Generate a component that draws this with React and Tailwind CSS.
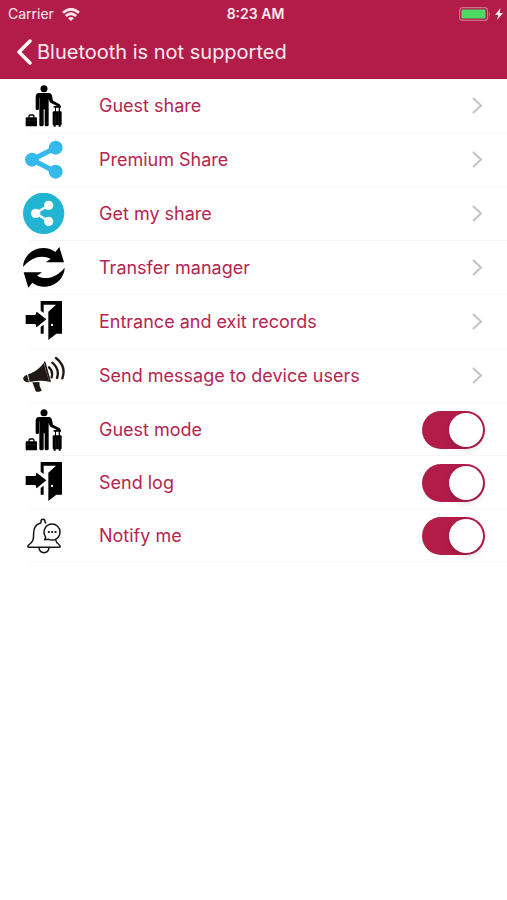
import React from "react";

function TravellerIcon() {
  return (
    <svg viewBox="0 0 126 126" className="size-[42px]" aria-hidden="true">
      <circle cx="63" cy="11" r="10.5" />
      <path d="M49 24h28c6 0 9 4 10 9l3 14 20 11c5 3 2 9-3 7L84 54c-3-2-4-4-5-7l-2-5v77c0 6-12 6-12 0V73h-3v46c0 6-13 6-13 0V38h-1v33c0 5-10 5-10 0V36c0-7 3-12 10-12z" />
      <path d="M92 63h22v5h-3v14h-4V68h-8v14h-3V68h-4z" />
      <rect x="89" y="79" width="27" height="42" rx="3" />
      <path d="M92 119h6v6h-6zM107 119h6v6h-6z" />
      <path d="M98 86v28M107 86v28" stroke="#555" strokeWidth="1" />
      <path d="M18 98v-4q0-4 4-4h7q4 0 4 4v4" fill="none" stroke="#000" strokeWidth="4" />
      <rect x="8" y="97" width="34" height="27" rx="2" />
      <path d="M9 107h32" stroke="#555" strokeWidth="1" />
    </svg>
  );
}

function ShareIcon() {
  return (
    <svg viewBox="0 0 126 126" className="size-[42px]" aria-hidden="true" fill="#35b9ea">
      <path d="M98 26L27 62l71 36" fill="none" stroke="#35b9ea" strokeWidth="15" />
      <circle cx="98" cy="26" r="21" />
      <circle cx="27" cy="62" r="21" />
      <circle cx="98" cy="98" r="21" />
    </svg>
  );
}

function ShareBadgeIcon() {
  return (
    <svg viewBox="0 0 126 126" className="size-[42px]" aria-hidden="true" fill="#fff">
      <circle cx="62" cy="61" r="62" fill="#22b4d3" />
      <path d="M77 37L38 61l39 24" fill="none" stroke="#fff" strokeWidth="7" />
      <circle cx="77" cy="37" r="14" />
      <circle cx="38" cy="61" r="14" />
      <circle cx="77" cy="85" r="14" />
    </svg>
  );
}

function TransferIcon() {
  return (
    <svg viewBox="0 0 126 126" className="size-[42px]" aria-hidden="true">
      <path d="M0 60C1 28 29 3 61 3c14 0 26 4 36 12L109 0l14 46-55 0 15-10C60 22 26 28 0 60z" />
      <path d="M125 62c-1 32-29 57-61 57-14 0-26-4-36-12l-12 15L2 76l55 0-15 10c23 14 57 8 83-24z" />
    </svg>
  );
}

function DoorIcon() {
  return (
    <svg viewBox="0 0 126 126" className="size-[42px]" aria-hidden="true">
      <path d="M53 0h64v98h-17L76 117V32L99 11H62v25l-9-7zM53 78l9-7v27h-9z" />
      <path d="M8 42h29c2 0 2-9 4-10l29 23-29 24c-2-1-2-10-4-10H8z" />
      <circle cx="87" cy="72" r="3.5" fill="#fff" />
    </svg>
  );
}

function MegaphoneIcon() {
  return (
    <svg viewBox="0 0 126 126" className="size-[42px]" aria-hidden="true" fill="#211815">
      <path d="M15 58C36 51 50 40 62 24l17 56c-18-4-38-4-59 1z" />
      <path d="M65 22l16 57" fill="none" stroke="#211815" strokeWidth="5" strokeLinecap="round" />
      <path d="M12 59l6 22c-18 5-25-17-6-22z" />
      <path d="M28 82l21-1 1 13 6 12c1 4-16 7-18 2z" />
      <path d="M78 37q13 12 8 30M88 23q23 20 14 46M99 9q32 25 19 61" fill="none" stroke="#211815" strokeWidth="7" strokeLinecap="round" />
    </svg>
  );
}

function BellIcon() {
  return (
    <svg viewBox="0 0 126 126" className="size-[42px]" aria-hidden="true" fill="none" stroke="#151515" strokeWidth="4.500" strokeLinejoin="round" strokeLinecap="round">
      <path d="M68 24c-2-3-2-3-2-4 0-10-12-10-12 0 0 2-1 4-3 5-13 4-19 15-19 29 0 20-1 26-15 36-4 3-3 7 1 7h90c4 0 5-4 1-7-7-5-10-9-11-15" />
      <path d="M48 98c2 20 28 20 30 0" />
      <path d="M68 67c-12-20 1-40 19-40 13 0 24 10 24 24 0 18-18 29-34 22l-12 1z" fill="#fff" />
      <path d="M77 51h1M87 51h1M97 51h1" strokeWidth="6" />
    </svg>
  );
}

const links = [
  { label: "Guest share", Icon: TravellerIcon },
  { label: "Premium Share", Icon: ShareIcon },
  { label: "Get my share", Icon: ShareBadgeIcon },
  { label: "Transfer manager", Icon: TransferIcon },
  { label: "Entrance and exit records", Icon: DoorIcon },
  { label: "Send message to device users", Icon: MegaphoneIcon },
];

const toggles = [
  { id: "guest-mode", label: "Guest mode", Icon: TravellerIcon },
  { id: "send-log", label: "Send log", Icon: DoorIcon },
  { id: "notify-me", label: "Notify me", Icon: BellIcon },
];

function StatusBar() {
  return (
    <div className="grid h-7 grid-cols-[1fr_auto_1fr] items-center pr-1 pl-2 text-sm">
      <div className="flex items-center gap-2">
        <span>Carrier</span>
        <svg viewBox="0 0 18 13" className="h-[13px] w-[18px]" aria-hidden="true" fill="none" stroke="currentColor" strokeWidth="2.800">
          <path d="M1 4.800q8-7 16 0M3.800 8q5.200-4.400 10.400 0" />
          <path d="M6 10.200q3-2.400 6 0L9 13z" fill="currentColor" stroke="none" />
        </svg>
      </div>
      <span className="font-semibold">8:23 AM</span>
      <div className="flex items-center justify-end gap-1">
        <svg viewBox="0 0 32 14" className="h-[14px] w-8" aria-hidden="true">
          <rect x="0.600" y="0.600" width="28" height="12.800" rx="3" fill="none" stroke="#d06f89" strokeWidth="1.200" />
          <rect x="2.500" y="2.500" width="24" height="9" rx="1" fill="#4cd964" />
          <path d="M30 5q2 2 0 4z" fill="#d06f89" />
        </svg>
        <svg viewBox="0 0 8 12" className="h-3 w-2" aria-hidden="true" fill="currentColor">
          <path d="M5.500 0L0 7h3.300L2 12l6-7H4.600z" />
        </svg>
      </div>
    </div>
  );
}

export default function App() {
  return (
    <div className="min-h-screen bg-white font-['Inter','Liberation_Sans',sans-serif] text-[#b5254f]">
      <header className="bg-[#b21c49] pb-[3px] text-[#ffe9ef]">
        <StatusBar />
        <div className="flex h-12 items-center gap-1 pl-4">
          <button type="button" aria-label="Back" className="text-white">
            <svg viewBox="0 0 17 26" className="h-[26px] w-[17px]" aria-hidden="true" fill="none" stroke="currentColor" strokeWidth="3.500" strokeLinecap="round" strokeLinejoin="round">
              <path d="M14 2L3 13l11 11" />
            </svg>
          </button>
          <h1 className="text-xl">Bluetooth is not supported</h1>
        </div>
      </header>
      <main className="text-lg">
        <nav>
          {links.map(({ label, Icon }) => (
            <React.Fragment key={label}>
              <a href="#" className="flex h-[54px] items-center pr-6 pl-[23px]">
                <Icon />
                <span className="ml-[34px] flex-1">{label}</span>
                <svg viewBox="0 0 12 18" className="h-[18px] w-3" aria-hidden="true" fill="none" stroke="#c3c3c6" strokeWidth="2">
                  <path d="M2 1L10 8.500l-8 7.500" />
                </svg>
              </a>
              <hr className="-mt-px ml-7 border-[#f7f7f8]" />
            </React.Fragment>
          ))}
        </nav>
        {toggles.map(({ id, label, Icon }) => (
          <React.Fragment key={id}>
            <div className="flex h-[53px] items-center pr-[22px] pl-[23px]">
              <Icon />
              <label htmlFor={id} className="ml-[34px] flex-1">{label}</label>
              <input
                id={id}
                type="checkbox"
                defaultChecked
                className="flex h-[38px] w-[63px] appearance-none items-center rounded-full bg-[#d8d8dc] p-[2px] before:size-[34px] before:rounded-full before:bg-white before:shadow-[0_3px_6px_rgba(0,0,0,0.15)] checked:justify-end checked:bg-[#b21c49]"
              />
            </div>
            <hr className="-mt-px ml-7 border-[#f7f7f8]" />
          </React.Fragment>
        ))}
      </main>
    </div>
  );
}
